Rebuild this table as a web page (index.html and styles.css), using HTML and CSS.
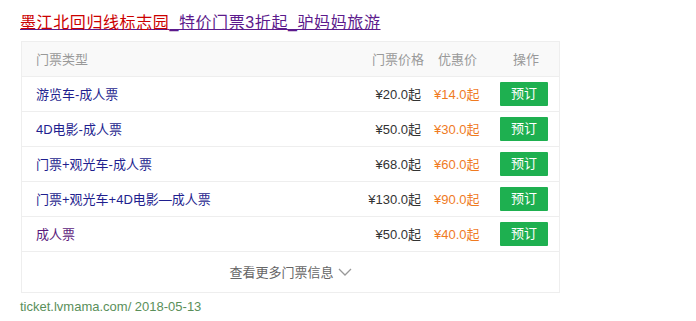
FILE: index.html
```html
<!DOCTYPE html>
<html>
<head>
<meta charset="utf-8">
<link rel="stylesheet" href="styles.css">
</head>
<body>
<div class="result">
  <h3 class="title"><a href="#"><em>墨江北回归线标志园</em>_特价门票3折起_驴妈妈旅游</a></h3>
  <div class="box">
    <div class="row head">
      <div class="c-type">门票类型</div>
      <div class="c-price">门票价格</div>
      <div class="c-sale">优惠价</div>
      <div class="c-op">操作</div>
    </div>
    <div class="row">
      <div class="c-type"><a href="#">游览车-成人票</a></div>
      <div class="c-price">¥20.0起</div>
      <div class="c-sale">¥14.0起</div>
      <div class="c-op"><span class="btn">预订</span></div>
    </div>
    <div class="row">
      <div class="c-type"><a href="#">4D电影-成人票</a></div>
      <div class="c-price">¥50.0起</div>
      <div class="c-sale">¥30.0起</div>
      <div class="c-op"><span class="btn">预订</span></div>
    </div>
    <div class="row">
      <div class="c-type"><a href="#">门票+观光车-成人票</a></div>
      <div class="c-price">¥68.0起</div>
      <div class="c-sale">¥60.0起</div>
      <div class="c-op"><span class="btn">预订</span></div>
    </div>
    <div class="row">
      <div class="c-type"><a href="#">门票+观光车+4D电影—成人票</a></div>
      <div class="c-price">¥130.0起</div>
      <div class="c-sale">¥90.0起</div>
      <div class="c-op"><span class="btn">预订</span></div>
    </div>
    <div class="row">
      <div class="c-type"><a href="#" class="visited">成人票</a></div>
      <div class="c-price">¥50.0起</div>
      <div class="c-sale">¥40.0起</div>
      <div class="c-op"><span class="btn">预订</span></div>
    </div>
    <div class="more">查看更多门票信息<svg class="chev" width="14" height="8" viewBox="0 0 14 8"><path d="M1 1 L7 7 L13 1" fill="none" stroke="#999" stroke-width="1.3"/></svg></div>
  </div>
  <div class="url">ticket.lvmama.com/&nbsp;2018-05-13</div>
</div>
</body>
</html>
```
FILE: styles.css
```css
* { box-sizing: border-box; }
body {
  margin: 0;
  background: #fff;
  font-family: Arial, "Liberation Sans", "Noto Sans CJK SC", sans-serif;
  font-size: 13px;
  color: #333;
}
.result {
  padding: 12px 0 0 20px;
  width: 560px;
}
.title {
  margin: 0;
  font-size: 16px;
  font-weight: normal;
  line-height: 22px;
  letter-spacing: 0.6px;
}
.title a {
  color: #5c1a8c;
  text-decoration: underline;
}
.title em {
  font-style: normal;
  color: #c00;
}
.box {
  margin-top: 7px;
  margin-left: 1px;
  border: 1px solid #eee;
  width: 539px;
}
.row {
  display: grid;
  grid-template-columns: 1fr 80px 72px 66px;
  align-items: center;
  height: 35px;
  border-bottom: 1px solid #eee;
}
.row.head {
  background: #f9f9f9;
  color: #999;
  height: 35px;
}
.c-type, .c-price, .c-sale { padding-bottom: 2px; }
.c-type { padding-left: 14px; }
.c-type a { color: #1f1f8f; text-decoration: none; }
.c-type a.visited { color: #5c1a7c; }
.c-price { text-align: right; }
.head .c-price { margin-right: -3px; }
.c-sale { padding-left: 13px; color: #f07b1f; }
.head .c-sale { color: #999; padding-left: 17px; }
.c-op { padding-left: 7px; }
.head .c-op { padding-left: 20px; padding-bottom: 2px; }
.btn {
  display: inline-block;
  width: 48px;
  height: 24px;
  line-height: 24px;
  text-align: center;
  background: #1eb050;
  color: #fff;
  border-radius: 1px;
}
.more {
  height: 40px;
  display: flex;
  align-items: center;
  justify-content: center;
  color: #666;
  padding-bottom: 2px;
}
.chev { margin-left: 4px; margin-top: 1px; }
.url {
  margin-top: 5px;
  color: #5a8f5a;
  font-size: 13px;
  line-height: 18px;
}
```
